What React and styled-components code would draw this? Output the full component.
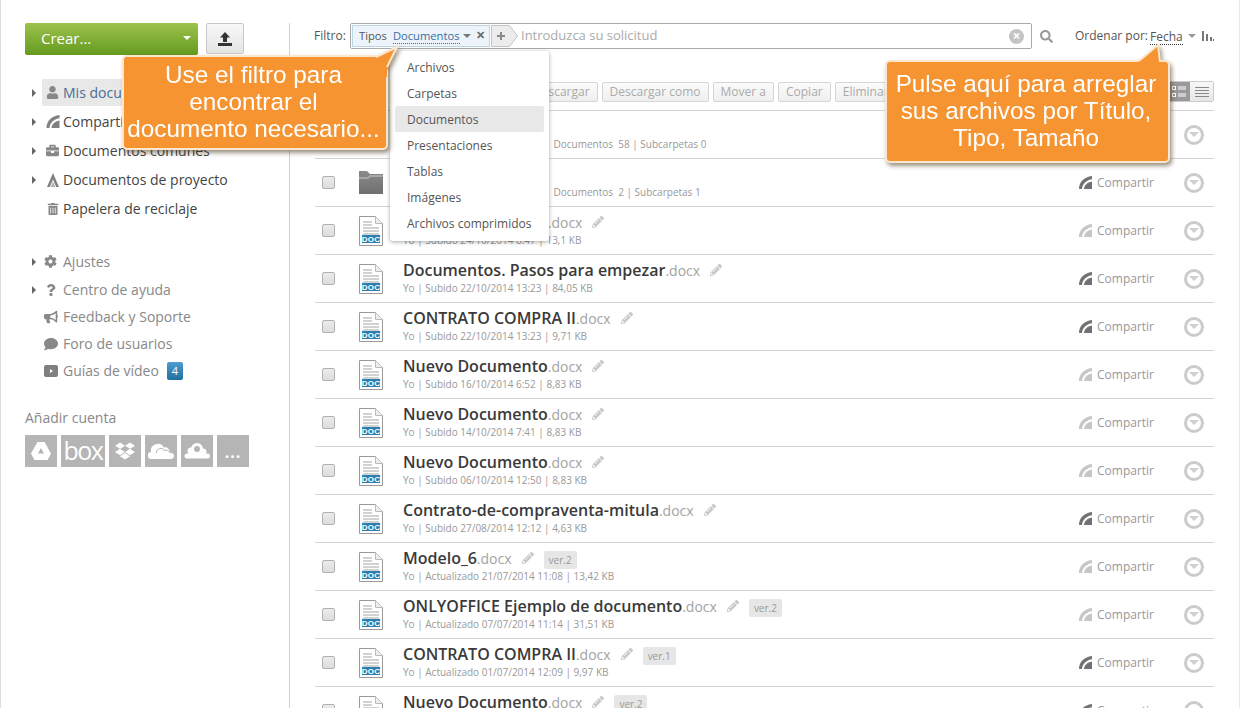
import React from "react";
import styled, { createGlobalStyle } from "styled-components";
import { FaUser, FaBriefcase, FaTrashAlt, FaCog, FaQuestion, FaBullhorn, FaComment, FaDropbox, FaSearch, FaPencilAlt } from "react-icons/fa";

const Global = createGlobalStyle`
  html, body { margin: 0; padding: 0; background: #fff; overflow: hidden; }
  body { font-family: "Open Sans", "Liberation Sans", sans-serif; color: #333; }
  * { box-sizing: border-box; }
`;

const Page = styled.div`
  position: relative; width: 1240px; height: 708px; overflow: hidden;
  display: flex; align-items: stretch; padding-top: 23px;
  border-left: 1px solid #dedede; border-right: 1px solid #e8e8e8;
`;
const Sidebar = styled.aside`
  width: 289px; flex: none; padding-left: 24px; border-right: 1px solid #d1d1d1;
`;
const CreateRow = styled.div`display: flex; gap: 8px; align-items: flex-start;`;
const CreateButton = styled.div`
  width: 173px; height: 32px; border-radius: 2px; padding: 0 7px 2px 16px;
  background: linear-gradient(#9cc34c, #659a1f); color: #fff; font-size: 15px;
  display: flex; align-items: center; justify-content: space-between;
`;
const Caret = styled.span`
  width: 0; height: 0; border-left: ${p => p.$s || 4}px solid transparent; border-right: ${p => p.$s || 4}px solid transparent;
  border-top: ${p => p.$s || 4}px solid ${p => p.$c || "#888"};
`;
const UploadButton = styled.div`
  width: 38px; height: 31px; border: 1px solid #c8c8c8; border-radius: 2px;
  background: linear-gradient(#f8f8f8, #e4e4e4); display: flex; align-items: center; justify-content: center;
`;
const NavGroup = styled.nav`margin-top: ${p => p.$top}px; display: flex; flex-direction: column;`;
const NavRow = styled.div`
  display: flex; align-items: center; height: ${p => p.$h}px;
  font-size: 14px; color: ${p => p.$muted ? "#888" : "#444"};
`;
const Arrow = styled.span`
  width: 17px; flex: none; display: flex; padding-left: 7px;
  &::before { content: ${p => p.$show ? '""' : 'none'}; border-top: 4px solid transparent; border-bottom: 4px solid transparent; border-left: 4px solid #666; }
`;
const NavBody = styled.div`
  display: flex; align-items: center; height: 27px; padding: 0 4px 0 0; min-width: 0;
  background: ${p => p.$active ? "#e8e8e8" : "transparent"}; color: ${p => p.$active ? "#4a6d96" : "inherit"};
  border-radius: 1px;
`;
const NavIcon = styled.span`
  width: 21px; flex: none; display: flex; justify-content: center; align-items: center; color: #888; font-size: 12px;
  padding-right: ${p => p.$tight ? 4 : 0}px;
`;
const Count = styled.span`
  margin-left: 8px; width: 16px; height: 18px; border-radius: 2px; background: linear-gradient(#4f9bd0, #20709f);
  color: #fff; font-size: 11px; display: flex; align-items: center; justify-content: center;
`;
const AccountTitle = styled.div`margin-top: 24px; font-size: 14px; line-height: 19px; color: #888;`;
const Tiles = styled.div`display: flex; gap: 4px; margin-top: 8px;`;
const Tile = styled.div`
  width: ${p => p.$w || 32}px; height: 32px; background: #b5b5b5; color: #fff;
  display: flex; align-items: center; justify-content: center;
`;
const BoxWord = styled.span`font-size: 25px; font-weight: 400; letter-spacing: -1.5px; line-height: 30px; font-family: "Open Sans", sans-serif; margin-top: -3px;`;
const Dots = styled.span`font-size: 16px; line-height: 16px; font-weight: 700; letter-spacing: 1px; margin-top: 2px;`;

const Main = styled.main`flex: 1; min-width: 0; padding: 0 25px;`;
const FilterBar = styled.div`display: flex; align-items: center; height: 26px; font-size: 12px; color: #555;`;
const FilterLabel = styled.span`width: 36px; flex: none; margin-left: -1px; margin-top: -2px;`;
const FilterBox = styled.div`
  width: 682px; height: 26px; border: 1px solid #aaa; border-radius: 2px; display: flex; align-items: center; padding-left: 1px; flex: none; margin-left: 0;
`;
const Tag = styled.div`
  height: 22px; width: 138px; border: 1px solid #bcd6e6; background: #ecf4f9; display: flex; align-items: center; padding: 0 0 2px 6px; color: #555; flex: none; font-size: 11.2px;
`;
const TagValue = styled.span`margin-left: 6px; color: #3a6ea5; border-bottom: 1px dotted #3a6ea5; line-height: 15px; margin-top: 1px;`;
const TagClose = styled.span`margin-left: 5px; font-size: 11px; font-weight: 700; color: #666; line-height: 14px;`;
const PlusWrap = styled.svg`margin-left: 1px; flex: none;`;
const Placeholder = styled.span`margin-left: 2px; margin-top: -2px; flex: 1; font-size: 13px; color: #aaa;`;
const ClearIcon = styled.span`
  width: 15px; height: 15px; border-radius: 50%; background: #c4c4c4; color: #fff; font-size: 14px; font-weight: 700;
  display: flex; align-items: center; justify-content: center; margin-right: 7px; line-height: 14px;
`;
const SearchBtn = styled.span`margin-left: 8px; width: 13px; flex: none; display: flex; color: #999; font-size: 13px;`;
const SortLabel = styled.span`margin-left: 22px; flex: none; margin-top: -2px;`;
const SortValue = styled.span`margin-left: 2px; color: #555; border-bottom: 1px dotted #333; line-height: 15px; margin-top: 1px;`;
const SortCaret = styled.span`margin-left: 5px; display: flex;`;
const SortBars = styled.svg`margin-left: 6px; flex: none;`;

const ActionBar = styled.div`display: flex; align-items: center; height: 21px; margin-top: 32px; margin-bottom: 8px; padding-left: 210px; gap: 4px;`;
const ActionButton = styled.div`
  height: 20px; padding: 0 7px; border: 1px solid #d6d6d6; border-radius: 2px; background: linear-gradient(#fbfbfb, #efefef);
  font-size: 12px; color: #aaa; display: flex; align-items: center; white-space: nowrap;
`;
const Spacer = styled.div`flex: 1;`;
const ViewToggle = styled.div`display: flex; height: 21px; border: 1px solid #ccc; border-radius: 2px; overflow: hidden;`;
const ViewCell = styled.div`
  width: 23px; display: flex; align-items: center; justify-content: center; background: ${p => p.$on ? "#9a9a9a" : "linear-gradient(#f8f8f8,#e6e6e6)"};
`;

const List = styled.div`border-top: 1px solid #d4d4d4;`;
const Row = styled.div`
  height: 48px; border-bottom: 1px solid #d4d4d4; display: flex; align-items: center; padding-left: 7px;
`;
const Check = styled.span`
  width: 13px; height: 13px; flex: none; border: 1px solid #b0b0b0; border-radius: 2px; background: linear-gradient(#ececec, #dcdcdc);
`;
const FileIcon = styled.svg`margin: 1px 0 0 24px; flex: none; display: block;`;
const Info = styled.div`margin-left: 20px; align-self: flex-start; padding-top: 4px; flex: 1; min-width: 0;`;
const TitleLine = styled.div`display: flex; align-items: center; height: 22px; white-space: nowrap;`;
const Name = styled.span`font-size: 16px; font-weight: 600; color: #3a3a3a;`;
const Ext = styled.span`font-size: 14px; color: #a3a3a3; font-weight: 400;`;
const Pencil = styled.span`margin-left: 10px; display: flex; font-size: 12px; color: #c8c8c8;`;
const Ver = styled.span`
  margin-left: 10px; height: 18px; padding: 0 5px; background: #e6e6e6; border-radius: 2px; font-size: 10px; color: #999;
  display: flex; align-items: center; margin-top: 4px;
`;
const Meta = styled.div`font-size: 10px; line-height: 14px; color: #999; white-space: nowrap;`;
const Share = styled.div`display: flex; align-items: center; gap: 5px; font-size: 12px; color: #999; flex: none; width: 105px;`;
const RowMenu = styled.span`
  width: 20px; height: 20px; border: 3px solid #cbcbcb; border-radius: 50%; margin-right: 10px; flex: none;
  display: flex; align-items: center; justify-content: center;
`;

const Menu = styled.div`
  position: absolute; left: 389px; top: 51px; width: 159px; height: 190px; background: #fff; border-radius: 3px;
  box-shadow: 0 1px 4px rgba(0,0,0,.35); padding: 3px 5px; z-index: 5;
`;
const MenuItem = styled.div`
  height: 26px; padding-left: 12px; display: flex; align-items: center; font-size: 12px; color: #555; border-radius: 2px;
  background: ${p => p.$on ? "#e8e8e8" : "transparent"};
`;
const Callout = styled.div`
  position: absolute; left: ${p => p.$x}px; top: ${p => p.$y}px; width: ${p => p.$w}px; height: ${p => p.$h}px;
  z-index: 10; filter: drop-shadow(2px 3px 2px rgba(60,40,10,.5));
`;
const CalloutBody = styled.div`
  width: 100%; height: 100%; background: #f59431; border: 2px solid #fde7cc; border-radius: 5px;
  color: #fff; font-family: "Liberation Sans", Arial, sans-serif; font-size: 24.3px; line-height: 27px; text-align: center;
  padding: ${p => p.$pad}px 3px 0 0; white-space: nowrap;
`;
const Tail = styled.svg`position: absolute; left: ${p => p.$x}px; top: ${p => p.$y}px; overflow: visible;`;

const ShareIcon = ({ dark }) => (
  <svg width="13" height="13" viewBox="0 0 13 13" fill={dark ? "#6f7276" : "#c6c6c6"} style={{ flex: "none" }}>
    <path d="M0 13C0 6 5 1 13 0v3.2C8 3.8 3.3 7.4 3 13z" />
    <path d="M5 13c.3-3.6 3-6.6 8-7.4V13z" />
  </svg>
);
const NavShare = () => (
  <svg width="14" height="13" viewBox="0 0 13 13" fill="#808080">
    <path d="M0 13C0 6 5 1 13 0v3.2C8 3.8 3.3 7.4 3 13z" /><path d="M5 13c.3-3.6 3-6.6 8-7.4V13z" />
  </svg>
);
const DocIcon = () => (
  <FileIcon width="24" height="30" viewBox="0 0 24 30">
    <path d="M.5.5h16l7 7v22H.5z" fill="#fff" stroke="#9a9a9a" />
    <path d="M16.5.5v7h7" fill="#eee" stroke="#bbb" />
    <path d="M4 6h9M4 9h9M4 12h16M4 15h16M4 18h16" stroke="#c4c4c4" strokeWidth="1.4" />
    <rect x="3" y="19" width="18" height="8" fill="#2a7fb0" />
    <text x="12" y="26" fontSize="8" fontWeight="700" letterSpacing=".3" fill="#fff" textAnchor="middle" fontFamily="Liberation Sans, sans-serif">DOC</text>
  </FileIcon>
);
const FolderIcon = () => (
  <FileIcon width="24" height="30" viewBox="0 0 24 30">
    <defs><linearGradient id="fg" x1="0" x2="0" y1="0" y2="1"><stop offset="0" stopColor="#8a8a8a" /><stop offset="1" stopColor="#6f6f6f" /></linearGradient></defs>
    <path d="M0 4h8l3 3h13v20H0z" fill="url(#fg)" transform="translate(0 -1)" />
    <path d="M0 9h8l3-2h13v2H12l-3 2H0z" fill="#a8a8a8" />
  </FileIcon>
);

const rows = [
  { kind: "folder", meta: "Yo | Creado 22/10/2014 13:23 | Documentos\u00a0\u00a058 | Subcarpetas 0", dark: true },
  { kind: "folder", meta: "Yo | Creado 22/10/2014 13:23 | Documentos\u00a0\u00a02 | Subcarpetas 1", dark: true },
  { name: "Nuevo Documento", meta: "Yo | Subido 24/10/2014 8:47 | 13,1 KB" },
  { name: "Documentos. Pasos para empezar", meta: "Yo | Subido 22/10/2014 13:23 | 84,05 KB", dark: true },
  { name: "CONTRATO COMPRA II", meta: "Yo | Subido 22/10/2014 13:23 | 9,71 KB", dark: true },
  { name: "Nuevo Documento", meta: "Yo | Subido 16/10/2014 6:52 | 8,83 KB" },
  { name: "Nuevo Documento", meta: "Yo | Subido 14/10/2014 7:41 | 8,83 KB" },
  { name: "Nuevo Documento", meta: "Yo | Subido 06/10/2014 12:50 | 8,83 KB" },
  { name: "Contrato-de-compraventa-mitula", meta: "Yo | Subido 27/08/2014 12:12 | 4,63 KB", dark: true },
  { name: "Modelo_6", ver: "ver.2", meta: "Yo | Actualizado 21/07/2014 11:08 | 13,42 KB" },
  { name: "ONLYOFFICE Ejemplo de documento", ver: "ver.2", meta: "Yo | Actualizado 07/07/2014 11:14 | 31,51 KB" },
  { name: "CONTRATO COMPRA II", ver: "ver.1", meta: "Yo | Actualizado 01/07/2014 12:09 | 9,97 KB", dark: true },
  { name: "Nuevo Documento", ver: "ver.2", meta: "Yo | Actualizado 01/07/2014 12:09 | 8,83 KB", dark: true },
];

const navTop = [
  { label: "Mis documentos", icon: <FaUser size={13} />, arrow: true, active: true, h: 29 },
  { label: "Compartido conmigo", icon: <NavShare />, arrow: true, h: 29 },
  { label: "Documentos comunes", icon: <FaBriefcase size={13} />, arrow: true, h: 29 },
  { label: "Documentos de proyecto", icon: (
    <svg width="12" height="14" viewBox="0 0 12 14" fill="#808080"><path d="M6 0l6 14H9.2L6 6.5 2.8 14H0z" /><path d="M6 8.5L8.2 14H3.8z" fill="#b0b0b0" /></svg>
  ), arrow: true, h: 29 },
  { label: "Papelera de reciclaje", icon: <FaTrashAlt size={12} />, h: 29 },
];
const navBottom = [
  { label: "Ajustes", icon: <FaCog size={13} />, arrow: true, h: 29 },
  { label: "Centro de ayuda", icon: <FaQuestion size={12} />, arrow: true, h: 27 },
  { label: "Feedback y Soporte", icon: <FaBullhorn size={14} />, h: 27 },
  { label: "Foro de usuarios", icon: <FaComment size={14} />, h: 27 },
  { label: "Guías de vídeo", icon: (
    <svg width="14" height="12" viewBox="0 0 14 12"><rect width="14" height="12" rx="2" fill="#808080" /><path d="M6 4l3 2-3 2z" fill="#fff" /></svg>
  ), count: 4, h: 27 },
];

const NavItem = ({ item, muted }) => (
  <NavRow $h={item.h} $muted={muted}>
    <Arrow $show={item.arrow} />
    <NavBody $active={item.active} style={item.active ? { width: 90 } : undefined}>
      <NavIcon $tight={muted}>{item.icon}</NavIcon>
      <span style={{ whiteSpace: "nowrap" }}>{item.label}</span>
      {item.count && <Count>{item.count}</Count>}
    </NavBody>
  </NavRow>
);

export default function App() {
  return (
    <Page>
      <Global />
      <Sidebar>
        <CreateRow>
          <CreateButton>Crear...<Caret $c="#fff" /></CreateButton>
          <UploadButton>
            <svg width="14" height="14" viewBox="0 0 14 14" fill="#333"><path d="M7 0l5 5.5H9V10H5V5.5H2z" /><path d="M0 11h14v3H0z" /></svg>
          </UploadButton>
        </CreateRow>
        <NavGroup $top={23}>{navTop.map(i => <NavItem key={i.label} item={i} />)}</NavGroup>
        <NavGroup $top={24}>{navBottom.map(i => <NavItem key={i.label} item={i} muted />)}</NavGroup>
        <AccountTitle>Añadir cuenta</AccountTitle>
        <Tiles>
          <Tile>
            <svg width="20" height="18" viewBox="0 0 20 18" fill="#fff"><path d="M6.5 0h7L20 11.5 16.5 18h-13L0 11.5zM10 6l-3 5.5h6z" fillRule="evenodd" /></svg>
          </Tile>
          <Tile $w={44}><BoxWord>box</BoxWord></Tile>
          <Tile><FaDropbox size={20} /></Tile>
          <Tile>
            <svg width="26" height="17" viewBox="0 0 26 17" fill="#fff"><path d="M3.500 16a3.500 3.500 0 0 1-.5-7A7 7 0 0 1 16 4.500a5 5 0 0 1 6 5.500 3 3 0 0 1 4 3c0 1.500-1 3-3 3z" /><path d="M8 10a5 5 0 0 1 9-2.500a4 4 0 0 1 5 2.500" stroke="#b5b5b5" fill="none" /></svg>
          </Tile>
          <Tile>
            <svg width="26" height="16" viewBox="0 0 26 16" fill="#fff"><circle cx="13" cy="6" r="6" /><circle cx="7" cy="8" r="3.500" /><circle cx="19" cy="9" r="3.500" /><circle cx="3" cy="13" r="2.500" /><circle cx="23.500" cy="13" r="2.500" /><rect x="3" y="11" width="20" height="4.500" /><circle cx="13" cy="6" r="3" fill="#b5b5b5" /></svg>
          </Tile>
          <Tile><Dots>...</Dots></Tile>
        </Tiles>
      </Sidebar>

      <Main>
        <FilterBar>
          <FilterLabel>Filtro:</FilterLabel>
          <FilterBox>
            <Tag>Tipos<TagValue>Documentos</TagValue><span style={{ marginLeft: 3, display: "flex", marginTop: 2 }}><Caret $c="#777" /></span><TagClose>✕</TagClose></Tag>
            <PlusWrap width="28" height="22" viewBox="0 0 28 22">
              <path d="M.5.5h18l8 10.500-8 10.500H.500z" fill="#ececec" stroke="#c4c4c4" />
              <path d="M10 7v8M6 11h8" stroke="#888" strokeWidth="2" />
            </PlusWrap>
            <Placeholder>Introduzca su solicitud</Placeholder>
            <ClearIcon>×</ClearIcon>
          </FilterBox>
          <SearchBtn><FaSearch /></SearchBtn>
          <SortLabel>Ordenar por:</SortLabel>
          <SortValue>Fecha</SortValue>
          <SortCaret><Caret $c="#999" /></SortCaret>
          <SortBars width="12" height="10" viewBox="0 0 12 10" fill="#777"><path d="M0 0h2v10H0zM4 3h2v7H4zM8 6h2v4H8zM11 8h1v2h-1z" /></SortBars>
        </FilterBar>

        <ActionBar>
          <ActionButton>Descargar</ActionButton>
          <ActionButton>Descargar como</ActionButton>
          <ActionButton>Mover a</ActionButton>
          <ActionButton>Copiar</ActionButton>
          <ActionButton>Eliminar</ActionButton>
          <Spacer />
          <ViewToggle>
            <ViewCell $on>
              <svg width="14" height="12" viewBox="0 0 14 12" fill="none" stroke="#fff"><rect x=".5" y=".5" width="3" height="3" /><rect x=".5" y="7.500" width="3" height="3" /><path d="M6 1h8M6 3h8M6 8h8M6 10h8" /></svg>
            </ViewCell>
            <ViewCell>
              <svg width="14" height="12" viewBox="0 0 14 12" stroke="#888"><path d="M0 1.500h14M0 4.500h14M0 7.500h14M0 10.500h14" /></svg>
            </ViewCell>
          </ViewToggle>
        </ActionBar>

        <List>
          {rows.map((r, i) => (
            <Row key={i}>
              <Check />
              {r.kind === "folder" ? <FolderIcon /> : <DocIcon />}
              <Info>
                <TitleLine>
                  {r.name && <Name>{r.name}<Ext>.docx</Ext></Name>}
                  {r.name && <Pencil><FaPencilAlt /></Pencil>}
                  {r.ver && <Ver>{r.ver}</Ver>}
                </TitleLine>
                <Meta>{r.meta}</Meta>
              </Info>
              <Share><ShareIcon dark={r.dark} />Compartir</Share>
              <RowMenu><Caret $c="#cfcfcf" $s={5} /></RowMenu>
            </Row>
          ))}
        </List>
      </Main>

      <Menu>
        <MenuItem>Archivos</MenuItem>
        <MenuItem>Carpetas</MenuItem>
        <MenuItem $on>Documentos</MenuItem>
        <MenuItem>Presentaciones</MenuItem>
        <MenuItem>Tablas</MenuItem>
        <MenuItem>Imágenes</MenuItem>
        <MenuItem>Archivos comprimidos</MenuItem>
      </Menu>

      <Callout $x={121} $y={55} $w={266} $h={95}>
        <CalloutBody $pad={4}>Use el filtro para<br />encontrar el<br />documento necesario...</CalloutBody>
        <Tail $x={242} $y={-8} width="34" height="30" viewBox="0 0 34 30">
          <path d="M12 10.500L33 0l-10 24v6H0V10.500z" fill="#f59431" />
          <path d="M12 10L33 0l-10 20" fill="none" stroke="#fde7cc" strokeWidth="2" />
        </Tail>
      </Callout>
      <Callout $x={884} $y={60} $w={285} $h={103}>
        <CalloutBody $pad={8}>Pulse aquí para arreglar<br />sus archivos por Título,<br />Tipo, Tamaño</CalloutBody>
        <Tail $x={253} $y={-15} width="22" height="20" viewBox="0 0 22 20">
          <path d="M0 17L20 0l2 17v3H0z" fill="#f59431" />
          <path d="M1 16L20 0l2 17" fill="none" stroke="#fde7cc" strokeWidth="2" />
        </Tail>
      </Callout>
    </Page>
  );
}
